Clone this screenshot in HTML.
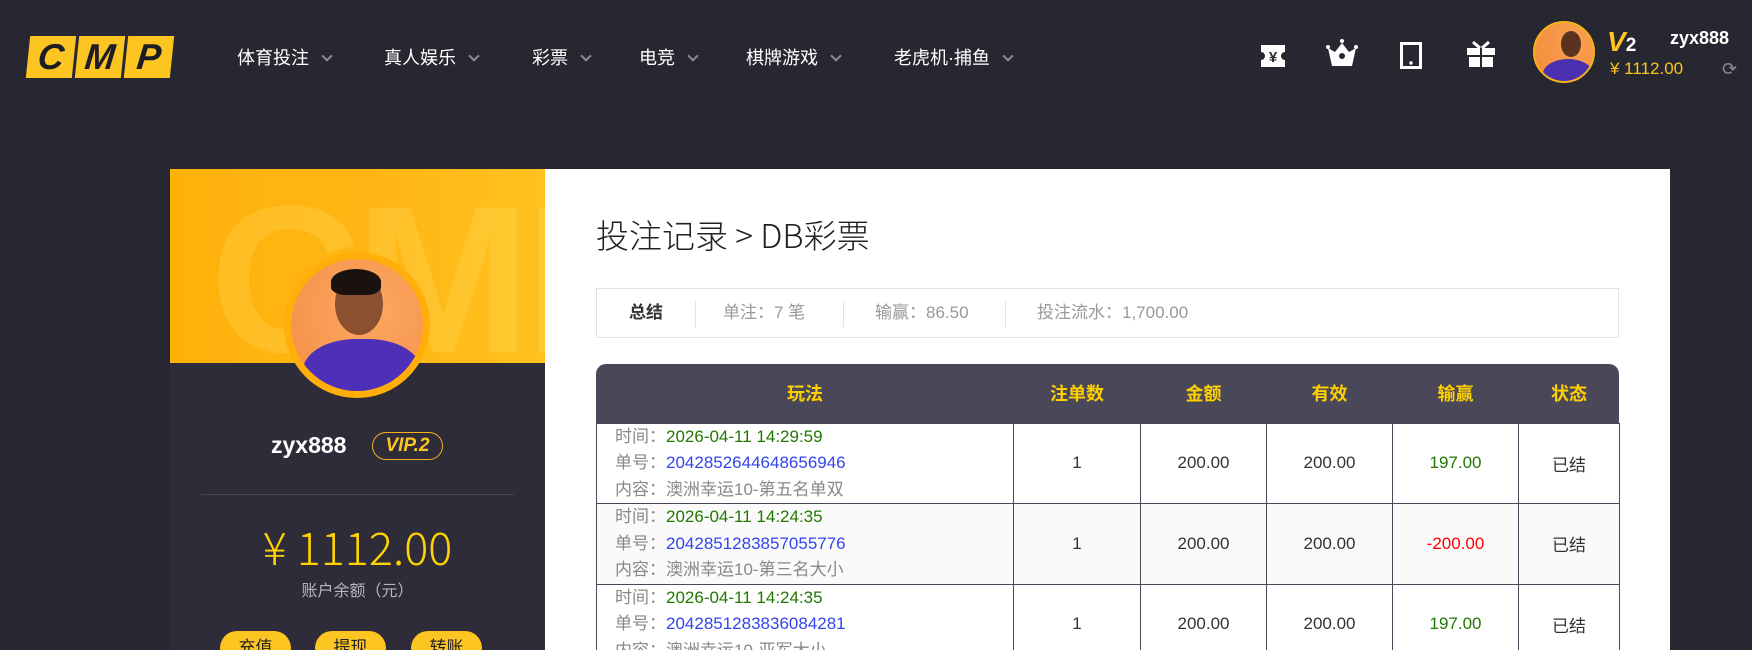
<!DOCTYPE html>
<html style="height:650px;overflow:hidden"><head><meta charset="utf-8"><style>
*{margin:0;padding:0;box-sizing:border-box}
body{width:1752px;height:650px;overflow:hidden;background:#272731;font-family:"Liberation Sans","Noto Sans CJK SC",sans-serif;position:relative}
.abs{position:absolute}
.nav{top:44px;color:#fff;font-size:18px;white-space:nowrap}
.nav span{display:inline-block;width:8px;height:8px;border-right:2.5px solid #8a8a98;border-bottom:2.5px solid #8a8a98;transform:rotate(45deg);margin-left:14px;position:relative;top:-4px}
.logo{top:36px;left:28px;height:42px;display:flex;gap:3px}
.logo div{width:46px;height:42px;background:#fdc521;transform:skewX(-6deg);font:italic 900 36px/42px "Liberation Sans",sans-serif;color:#1d1d25;text-align:center}
.left{left:170px;top:169px;width:375px;height:481px;background:#2d2c38;overflow:hidden}
.banner{left:0;top:0;width:375px;height:194px;background:linear-gradient(90deg,#ffb10a,#ffb716 60%,#ffc21e);overflow:hidden}
.right{left:545px;top:169px;width:1125px;height:481px;background:#fff}
table{border-collapse:collapse;position:absolute;left:596px;top:364px;width:1023px;table-layout:fixed}
th{color:#ffd000;font-size:18px;font-weight:bold;height:59px}
td{border:1px solid #4a4858;height:80px;text-align:center;font-size:17px;color:#333}
td.f{text-align:left;padding-left:18px;line-height:26.5px;color:#888;font-size:17px}
.g{color:#227700}.b{color:#3344ee}.r{color:#f00}
.btn{top:631px;width:71px;height:34px;border-radius:17px;background:#fdc521;color:#222;font-size:17px;text-align:center;line-height:34px}
</style></head><body>
<div class="abs logo"><div>C</div><div>M</div><div>P</div></div>
<div class="abs nav" style="left:237px">体育投注<span></span></div>
<div class="abs nav" style="left:384px">真人娱乐<span></span></div>
<div class="abs nav" style="left:532px">彩票<span></span></div>
<div class="abs nav" style="left:639px">电竞<span></span></div>
<div class="abs nav" style="left:746px">棋牌游戏<span></span></div>
<div class="abs nav" style="left:894px">老虎机·捕鱼<span></span></div>
<svg class="abs" style="left:1260px;top:44px" width="26" height="24" viewBox="0 0 26 24"><path d="M1 1h24v7a4 4 0 0 0 0 8v7H1v-7a4 4 0 0 0 0-8z" fill="#fff"/><text x="13" y="18" text-anchor="middle" font-size="15" font-weight="bold" fill="#272731" font-family="Liberation Sans">¥</text></svg>
<svg class="abs" style="left:1326px;top:38px" width="32" height="30" viewBox="0 0 32 30"><circle cx="16" cy="3" r="2" fill="#fff"/><circle cx="2" cy="9" r="2" fill="#fff"/><circle cx="30" cy="9" r="2" fill="#fff"/><path d="M2 10l7 4 7-9 7 9 7-4-4 18H6z" fill="#fff"/><circle cx="16" cy="18" r="3" fill="#272731"/></svg>
<svg class="abs" style="left:1400px;top:42px" width="22" height="27" viewBox="0 0 22 27"><rect x="1.5" y="1.5" width="19" height="24" fill="none" stroke="#fff" stroke-width="3"/><circle cx="11" cy="21" r="1.7" fill="#fff"/></svg>
<svg class="abs" style="left:1466px;top:40px" width="30" height="28" viewBox="0 0 30 28"><path d="M7 2l7 6M23 2l-7 6" stroke="#fff" stroke-width="3"/><rect x="1" y="8" width="13" height="7" fill="#fff"/><rect x="16" y="8" width="13" height="7" fill="#fff"/><rect x="3" y="17" width="11" height="10" fill="#fff"/><rect x="16" y="17" width="11" height="10" fill="#fff"/></svg>
<div class="abs" style="left:1533px;top:21px;width:62px;height:62px;border-radius:50%;border:2px solid #f5b21c;background:radial-gradient(circle at 70% 30%,#f8a050,#f48a3a);overflow:hidden"><div style="position:absolute;left:8px;top:36px;width:50px;height:30px;border-radius:50% 50% 0 0;background:#4a2fb0"></div><div style="position:absolute;left:26px;top:8px;width:20px;height:26px;border-radius:50%;background:#5a3220"></div></div>
<div class="abs" style="left:1607px;top:26px;font:italic bold 28px 'Liberation Sans';color:#fdc521">V<span style="font-size:19px;color:#fff;font-style:normal">2</span></div>
<div class="abs" style="left:1670px;top:28px;color:#fff;font-weight:bold;font-size:18px">zyx888</div>
<div class="abs" style="left:1610px;top:59px;color:#fdc521;font-size:17px">¥ 1112.00</div>
<div class="abs" style="left:1722px;top:59px;color:#8a8a98;font-size:18px">⟳</div>

<div class="abs left">
 <div class="abs banner"><div style="position:absolute;left:40px;top:-10px;font:bold 210px 'Liberation Sans';color:rgba(255,230,120,.22);letter-spacing:-6px">CMP</div></div>
 <div class="abs" style="left:114px;top:83px;width:146px;height:146px;border-radius:50%;background:#ffae0a;padding:7px"><div style="width:132px;height:132px;border-radius:50%;background:radial-gradient(circle at 60% 40%,#fba862,#f48d45);position:relative;overflow:hidden"><div style="position:absolute;left:12px;top:80px;width:118px;height:70px;border-radius:45% 45% 0 0;background:#4d2fb8"></div><div style="position:absolute;left:44px;top:14px;width:48px;height:62px;border-radius:50%;background:#8a5030"></div><div style="position:absolute;left:40px;top:10px;width:50px;height:26px;border-radius:50% 50% 30% 30%;background:#1a120e"></div></div></div>
 <div class="abs" style="left:101px;top:263px;color:#fff;font-weight:bold;font-size:23px">zyx888</div>
 <div class="abs" style="left:202px;top:263px;width:71px;height:28px;border:1.5px solid #f5b21c;border-radius:14px;color:#fdc521;font:italic bold 19px/25px 'Liberation Sans';text-align:center">VIP.2</div>
 <div class="abs" style="left:31px;top:325px;width:313px;height:1px;background:#44434f"></div>
 <div class="abs" style="left:0;width:375px;top:349px;text-align:center;color:#ffd200;font-size:45px;font-family:'Noto Sans CJK SC','Liberation Sans',sans-serif;font-weight:300;line-height:56px">¥ 1112.00</div>
 <div class="abs" style="left:0;width:375px;top:408px;text-align:center;color:#b5b5c0;font-size:16px">账户余额（元）</div>
</div>
<div class="abs btn" style="left:220px">充值</div>
<div class="abs btn" style="left:315px">提现</div>
<div class="abs btn" style="left:411px">转账</div>

<div class="abs right"></div>
<div class="abs" style="left:596px;top:210px;font-size:33px;color:#222;font-family:'Noto Sans CJK SC',sans-serif;font-weight:300">投注记录 &gt; DB彩票</div>
<div class="abs" style="left:596px;top:288px;width:1023px;height:50px;border:1px solid #e2e2e6;font-size:17px;color:#999;line-height:48px">
 <span class="abs" style="left:32px;color:#333;font-weight:bold">总结</span>
 <span class="abs" style="left:98px;top:12px;width:1px;height:26px;background:#e2e2e6"></span>
 <span class="abs" style="left:126px">单注：7 笔</span>
 <span class="abs" style="left:246px;top:12px;width:1px;height:26px;background:#e2e2e6"></span>
 <span class="abs" style="left:278px">输赢：86.50</span>
 <span class="abs" style="left:408px;top:12px;width:1px;height:26px;background:#e2e2e6"></span>
 <span class="abs" style="left:440px">投注流水：1,700.00</span>
</div>
<div class="abs" style="left:596px;top:364px;width:1023px;height:59px;background:#4a4858;border-radius:10px 10px 0 0"></div>
<table>
<colgroup><col style="width:417px"><col style="width:127px"><col style="width:126px"><col style="width:126px"><col style="width:126px"><col style="width:101px"></colgroup>
<tr><th>玩法</th><th>注单数</th><th>金额</th><th>有效</th><th>输赢</th><th>状态</th></tr>
<tr><td class="f">时间：<span class="g">2026-04-11 14:29:59</span><br>单号：<span class="b">2042852644648656946</span><br>内容：澳洲幸运10-第五名单双</td><td>1</td><td>200.00</td><td>200.00</td><td class="g">197.00</td><td>已结</td></tr>
<tr style="background:#fafafa"><td class="f">时间：<span class="g">2026-04-11 14:24:35</span><br>单号：<span class="b">2042851283857055776</span><br>内容：澳洲幸运10-第三名大小</td><td>1</td><td>200.00</td><td>200.00</td><td class="r">-200.00</td><td>已结</td></tr>
<tr><td class="f">时间：<span class="g">2026-04-11 14:24:35</span><br>单号：<span class="b">2042851283836084281</span><br>内容：澳洲幸运10-亚军大小</td><td>1</td><td>200.00</td><td>200.00</td><td class="g">197.00</td><td>已结</td></tr>
</table>
</body></html>
